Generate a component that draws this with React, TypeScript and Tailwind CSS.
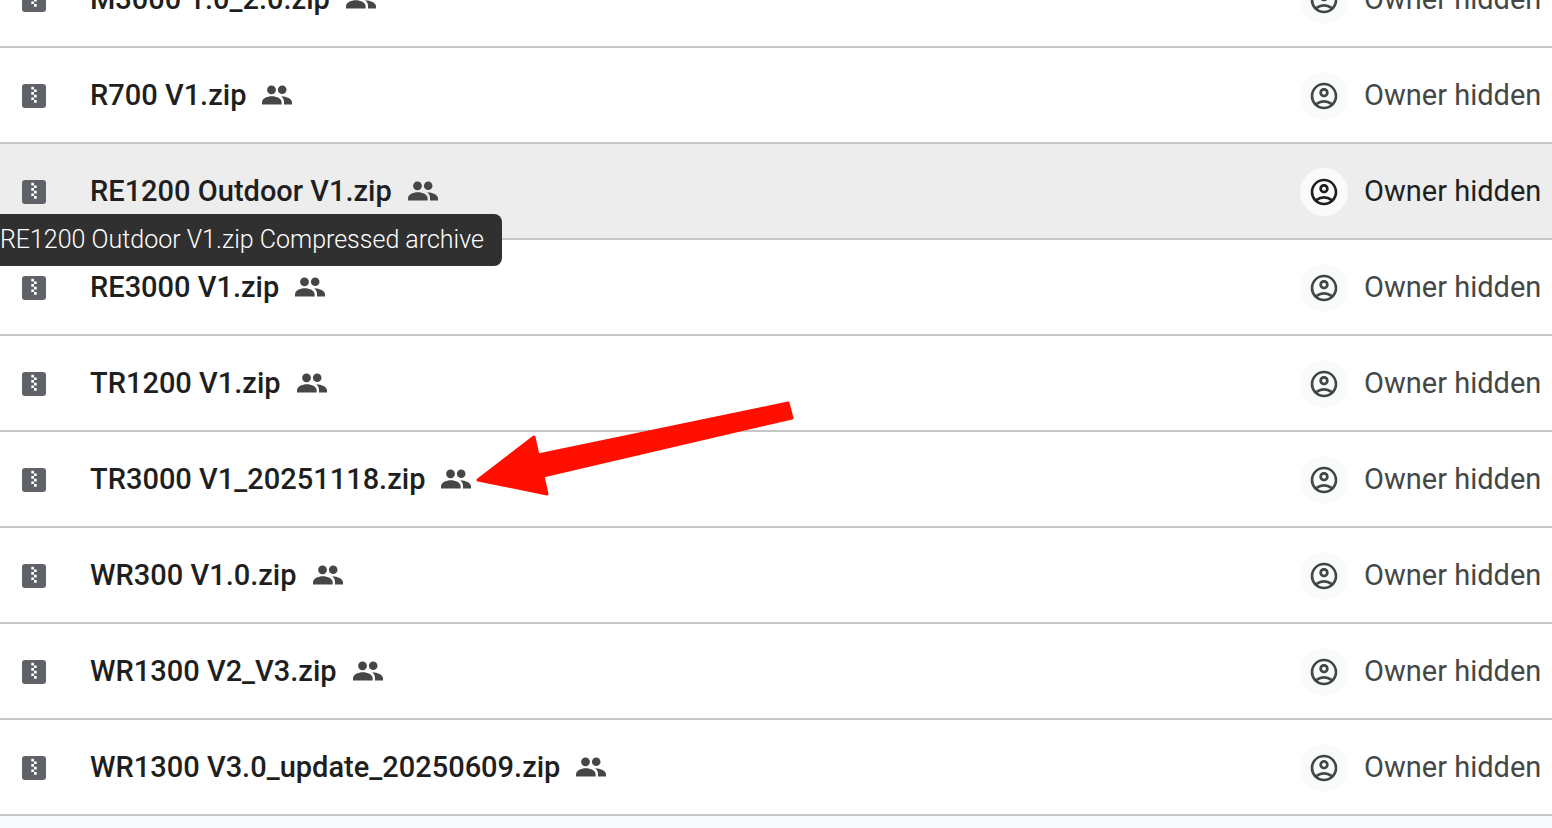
import { MdOutlineAccountCircle } from 'react-icons/md';

const files = [
  { name: 'M3000 1.0_2.0.zip' },
  { name: 'R700 V1.zip' },
  { name: 'RE1200 Outdoor V1.zip', hovered: true },
  { name: 'RE3000 V1.zip' },
  { name: 'TR1200 V1.zip' },
  { name: 'TR3000 V1_20251118.zip', marked: true },
  { name: 'WR300 V1.0.zip' },
  { name: 'WR1300 V2_V3.zip' },
  { name: 'WR1300 V3.0_update_20250609.zip' },
];

function ZipIcon() {
  return (
    <svg viewBox="0 0 24 24" className="size-6 shrink-0" aria-hidden="true">
      <rect width="24" height="24" rx="3" fill="#5f6368" />
      <path
        fill="#fff"
        d="M9.3 2.8H12v2.7H9.3zM12 5.5h2.7v2.6H12zM9.3 8.1H12v2.7H9.3zM12 10.8h2.7v2.7H12zM9.3 13.5H12v2.6H9.3zM12 16.1h2.7v2.7H12z"
      />
    </svg>
  );
}

function SharedIcon() {
  return (
    <svg
      viewBox="0 0 30 24"
      className="h-6 w-[30px] shrink-0 fill-[#444746]"
      aria-hidden="true"
    >
      <circle cx="9.5" cy="5.8" r="4.4" />
      <circle cx="20.2" cy="5.8" r="4.3" />
      <path d="M0 20.5v-2.3c0-3.7 5-6 9.8-6s9.8 2.3 9.8 6v2.3z" />
      <path d="M19.2 12.2c5.6.3 10.8 2.6 10.8 6v2.3h-8v-2.8c0-2.2-1-4.1-2.8-5.5z" />
    </svg>
  );
}

function Arrow() {
  return (
    <svg
      viewBox="0 0 320 96"
      className="pointer-events-none absolute -top-8 left-[407px] z-10 h-24 w-80"
      aria-hidden="true"
    >
      <path
        d="M3 80 59 37l4 18L313 3l4 15L68 76l4 18z"
        fill="#ff0f00"
        stroke="#ff0f00"
        strokeWidth="3"
        strokeLinejoin="round"
      />
    </svg>
  );
}

export default function App() {
  return (
    <main className="h-screen overflow-hidden bg-[#f8fafd] font-[Roboto,sans-serif] text-[29px] leading-9">
      {/* The list is scrolled half a row down */}
      <table className="-mt-12 w-full border-separate border-spacing-0 bg-white">
        <tbody>
          {files.map((file) => (
            <tr key={file.name} className={file.hovered ? 'bg-[#ededed]' : ''}>
              {/* Type */}
              <td className="h-24 w-[68px] border-b-2 border-[#c7c7c7] pt-0.5 pl-[22px]">
                <ZipIcon />
              </td>

              {/* Name */}
              <td className="relative h-24 border-b-2 border-[#c7c7c7] pt-0.5 pl-[22px]">
                <div className="flex items-center gap-4 font-medium whitespace-nowrap text-[#1f1f1f]">
                  <span className="pb-0.5">{file.name}</span>
                  <SharedIcon />
                </div>
                {file.hovered && (
                  <div
                    role="tooltip"
                    className="absolute top-[70px] right-full z-10 -mr-[434px] rounded-lg bg-[#303030] px-[18px] py-2 text-[25px] leading-9 font-light whitespace-nowrap text-white"
                  >
                    {file.name} Compressed archive
                  </div>
                )}
                {file.marked && <Arrow />}
              </td>

              {/* Owner */}
              <td className="h-24 w-[252px] border-b-2 border-[#c7c7c7] pt-0.5">
                <div
                  className={`flex items-center gap-4 whitespace-nowrap ${
                    file.hovered ? 'text-[#1f1f1f]' : 'text-[#444746]'
                  }`}
                >
                  <span className="flex size-12 shrink-0 items-center justify-center rounded-full bg-[#f9fbfb]">
                    <MdOutlineAccountCircle className="size-8" />
                  </span>
                  <span className="pb-0.5">Owner hidden</span>
                </div>
              </td>
            </tr>
          ))}
        </tbody>
      </table>
    </main>
  );
}
